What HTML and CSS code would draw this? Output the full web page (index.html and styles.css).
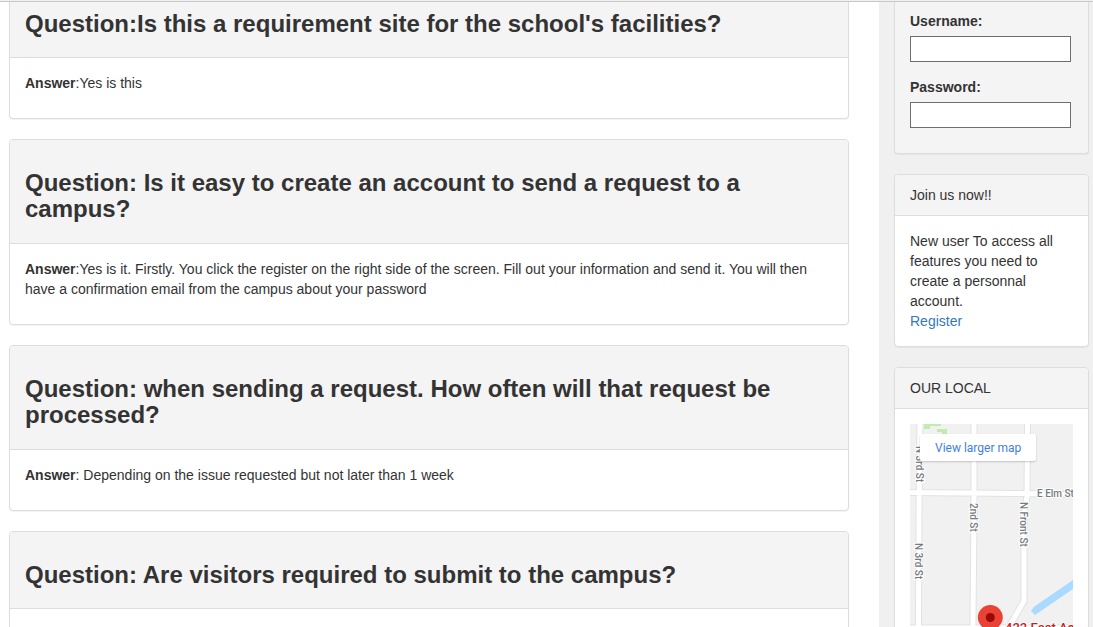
FILE: index.html
```html
<!DOCTYPE html>
<html lang="en">
<head>
<meta charset="utf-8">
<title>Questions and answers</title>
<link rel="stylesheet" href="styles.css">
</head>
<body>
<div class="page">
  <main class="content">
    <section class="panel panel-continued">
      <header class="panel-heading"><h3 class="question">Question:Is this a requirement site for the school's facilities?</h3></header>
      <div class="panel-body"><p class="answer"><strong>Answer</strong>:Yes is this</p></div>
    </section>
    <section class="panel">
      <header class="panel-heading"><h3 class="question">Question: Is it easy to create an account to send a request to a campus?</h3></header>
      <div class="panel-body"><p class="answer"><strong>Answer</strong>:Yes is it. Firstly. You click the register on the right side of the screen. Fill out your information and send it. You will then have a confirmation email from the campus about your password</p></div>
    </section>
    <section class="panel">
      <header class="panel-heading"><h3 class="question">Question: when sending a request. How often will that request be processed?</h3></header>
      <div class="panel-body"><p class="answer"><strong>Answer</strong>: Depending on the issue requested but not later than 1 week</p></div>
    </section>
    <section class="panel">
      <header class="panel-heading"><h3 class="question">Question: Are visitors required to submit to the campus?</h3></header>
      <div class="panel-body"></div>
    </section>
  </main>
  <aside class="sidebar">
    <form class="panel panel-continued login">
      <label class="field-label" for="username">Username:</label>
      <input class="field" id="username" type="text">
      <label class="field-label" for="password">Password:</label>
      <input class="field" id="password" type="password">
    </form>
    <section class="panel">
      <header class="panel-heading">Join us now!!</header>
      <div class="panel-body">New user To access all features you need to create a personnal account.<br><a class="link" href="#register">Register</a></div>
    </section>
    <section class="panel">
      <header class="panel-heading">OUR LOCAL</header>
      <div class="panel-body">
        <div class="map">
          <svg class="map-canvas" width="163" height="300" viewBox="0 0 163 300" preserveAspectRatio="xMinYMin slice" role="img" aria-label="Street map">
            <rect class="land" width="163" height="300"/>
            <path class="park" d="M14 0h17v2H20v3h-6zM27 5h10v5h-5V8h-5z"/>
            <g class="road-edge">
              <path d="M10 -4L9 90L8 300M64 -4L64 90L62 300M117.500 -4L117 72L114 90V177L96 208M-4 68.500L117 69.500L170 71M-4 204H170"/>
            </g>
            <g class="road">
              <path d="M10 -4L9 90L8 300M64 -4L64 90L62 300M117.500 -4L117 72L114 90V177L96 208M-4 68.500L117 69.500L170 71M-4 204H170"/>
            </g>
            <path class="water" d="M163 156V165L125 191L121 187Q124 182 128 180Z"/>
            <g class="street">
              <text transform="translate(6 22) rotate(90)">N 3rd St</text>
              <text transform="translate(5 119) rotate(90)">N 3rd St</text>
              <text transform="translate(60 79) rotate(90)">2nd St</text>
              <text transform="translate(110 78) rotate(90)">N Front St</text>
              <text x="127" y="73">E Elm St</text>
            </g>
            <path class="pin" d="M67.800 193.500a12.500 12.500 0 0 1 25 0c0 9-10 11-12.500 26c-2.500-15-12.500-17-12.500-26z"/>
            <circle class="pin-dot" cx="80.300" cy="193.500" r="4.500"/>
            <text class="place" x="95" y="208">422 East Ac</text>
          </svg>
          <a class="map-link" href="#map">View larger map</a>
        </div>
      </div>
    </section>
  </aside>
</div>
</body>
</html>
```
FILE: styles.css
```css
* { box-sizing: border-box; }
body {
  margin: 0;
  border-top: 1px solid #f0f0f0;
  font: 14px/20px "Liberation Sans", Arial, sans-serif;
  color: #333;
  background: #fff;
}
.page {
  display: flex;
  height: calc(100vh - 1px);
  overflow: hidden;
  border-top: 1px solid #c8c8c8;
}
.content { flex: 1; min-width: 0; padding: 0 30px 0 9px; }
.sidebar {
  flex: 0 0 214px;
  height: max-content;
  min-height: 100%;
  padding: 0 4px 0 15px;
  background: #f0f0f0;
}
.panel {
  margin-bottom: 20px;
  border: 1px solid #ddd;
  border-radius: 4px;
  background: #fff;
  box-shadow: 0 1px 1px rgba(0, 0, 0, 0.05);
}
.panel-heading {
  padding: 10px 15px;
  border-bottom: 1px solid #ddd;
  border-radius: 3px 3px 0 0;
  background: #f4f4f4;
}
.panel-body { padding: 15px; }
.question { margin: 20px 0 10px; font-size: 24px; line-height: 1.1; font-weight: bold; }
.panel-continued { border-top: 0; border-radius: 0 0 4px 4px; }
.panel-continued .panel-heading { padding-top: 9px; border-radius: 0; }
.panel-continued .question { margin-top: 0; line-height: 26px; }
.answer { margin: 0 0 10px; }
.login { padding: 9px 15px 25px; background: #f4f4f4; }
.field-label { display: block; margin-bottom: 5px; font-weight: bold; }
.field {
  display: block;
  width: 100%;
  max-width: 161px;
  height: 26px;
  padding: 1px 4px;
  border: 1px solid #6e6e6e;
  border-radius: 0;
  background: #fff;
  font: inherit;
}
.field + .field-label { margin-top: 15px; }
.link { color: #337ab7; text-decoration: none; }
.map { position: relative; overflow: hidden; }
.map-canvas { display: block; width: 100%; height: 300px; }
.map-link {
  position: absolute;
  top: 10px;
  left: 10px;
  padding: 4px 15px 3px;
  border-radius: 2px;
  background: #fff;
  box-shadow: 0 1px 2px rgba(0, 0, 0, 0.2);
  color: #3f7fe0;
  font-family: Roboto, sans-serif;
  font-size: 12px;
  text-decoration: none;
  white-space: nowrap;
}
.land { fill: #f1f1f1; }
.park { fill: #c0ecae; }
.water { fill: #aadaff; }
.road-edge { fill: none; stroke: #e2e2e2; stroke-width: 7; }
.road { fill: none; stroke: #fff; stroke-width: 5; }
.street {
  fill: #757b80;
  stroke: #fff;
  stroke-width: 2;
  paint-order: stroke;
  font-family: Roboto, sans-serif;
  font-size: 10px;
  font-weight: 500;
}
.pin { fill: #ea4335; }
.pin-dot { fill: #960a0a; }
.place {
  fill: #c5221f;
  stroke: #fff;
  stroke-width: 2;
  paint-order: stroke;
  font-family: Roboto, sans-serif;
  font-size: 13px;
  font-weight: 500;
}
```
